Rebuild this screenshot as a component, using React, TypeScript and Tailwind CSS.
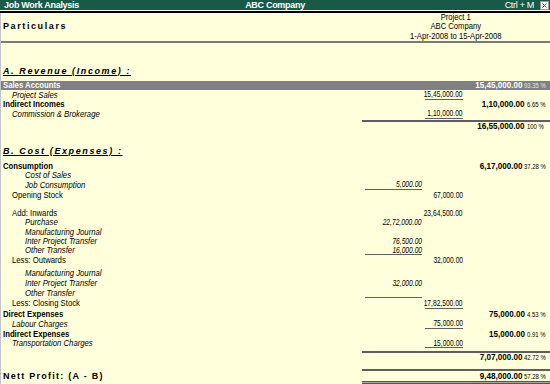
type Row = {
  kind: "spacer" | "head" | "group" | "item" | "sub" | "sub2" | "line" | "total" | "nett" | "double";
  label?: string;
  h: string;
  c1?: string;
  c1u?: boolean;
  c2?: string;
  c2u?: boolean;
  c3?: string;
  pct?: string;
  hl?: boolean;
};

const rows: Row[] = [
  { kind: "spacer", h: "h-[23px]" },
  { kind: "head", label: "A. Revenue (Income) :", h: "h-[10px]" },
  { kind: "spacer", h: "h-[5px]" },
  { kind: "group", label: "Sales Accounts", c3: "15,45,000.00", pct: "93.35 %", hl: true, h: "h-[9px]" },
  { kind: "sub", label: "Project Sales", c2: "15,45,000.00", c2u: true, h: "h-[10px]" },
  { kind: "group", label: "Indirect Incomes", c3: "1,10,000.00", pct: "6.65 %", h: "h-[9px]" },
  { kind: "sub", label: "Commission & Brokerage", c2: "1,10,000.00", c2u: true, h: "h-[10px]" },
  { kind: "spacer", h: "h-[1px]" },
  { kind: "line", h: "h-[2px]" },
  { kind: "total", c3: "16,55,000.00", pct: "100 %", h: "h-[9px]" },
  { kind: "spacer", h: "h-[15px]" },
  { kind: "head", label: "B. Cost (Expenses) :", h: "h-[10px]" },
  { kind: "spacer", h: "h-[5px]" },
  { kind: "group", label: "Consumption", c3: "6,17,000.00", pct: "37.28 %", h: "h-[10px]" },
  { kind: "sub2", label: "Cost of Sales", h: "h-[9px]" },
  { kind: "sub2", label: "Job Consumption", c1: "5,000.00", c1u: true, h: "h-[10px]" },
  { kind: "item", label: "Opening Stock", c2: "67,000.00", h: "h-[10px]" },
  { kind: "spacer", h: "h-[9px]" },
  { kind: "item", label: "Add: Inwards", c2: "23,64,500.00", h: "h-[9px]" },
  { kind: "sub2", label: "Purchase", c1: "22,72,000.00", h: "h-[9px]" },
  { kind: "sub2", label: "Manufacturing Journal", h: "h-[10px]" },
  { kind: "sub2", label: "Inter Project Transfer", c1: "76,500.00", h: "h-[9px]" },
  { kind: "sub2", label: "Other Transfer", c1: "16,000.00", c1u: true, h: "h-[9px]" },
  { kind: "item", label: "Less: Outwards", c2: "32,000.00", h: "h-[10px]" },
  { kind: "spacer", h: "h-[3px]" },
  { kind: "sub2", label: "Manufacturing Journal", h: "h-[10px]" },
  { kind: "sub2", label: "Inter Project Transfer", c1: "32,000.00", h: "h-[10px]" },
  { kind: "sub2", label: "Other Transfer", c1: "", c1u: true, h: "h-[10px]" },
  { kind: "item", label: "Less: Closing Stock", c2: "17,82,500.00", c2u: true, h: "h-[11px]" },
  { kind: "spacer", h: "h-[1px]" },
  { kind: "group", label: "Direct Expenses", c3: "75,000.00", pct: "4.53 %", h: "h-[9px]" },
  { kind: "sub", label: "Labour Charges", c2: "75,000.00", c2u: true, h: "h-[10px]" },
  { kind: "group", label: "Indirect Expenses", c3: "15,000.00", pct: "0.91 %", h: "h-[10px]" },
  { kind: "sub", label: "Transportation Charges", c2: "15,000.00", c2u: true, h: "h-[9px]" },
  { kind: "spacer", h: "h-[3px]" },
  { kind: "line", h: "h-[2px]" },
  { kind: "total", c3: "7,07,000.00", pct: "42.72 %", h: "h-[9px]" },
  { kind: "spacer", h: "h-[7px]" },
  { kind: "line", h: "h-[2px]" },
  { kind: "nett", label: "Nett Profit: (A - B)", c3: "9,48,000.00", pct: "57.28 %", h: "h-[10px]" },
  { kind: "double", h: "h-[3px]" },
];

// narrow text: the report font is a condensed sans, so squeeze Liberation Sans a bit
function Narrow({ children, className = "" }: { children: React.ReactNode; className?: string }) {
  return <span className={`inline-block origin-left scale-x-[0.86] whitespace-nowrap ${className}`}>{children}</span>;
}

function Label({ row }: { row: Row }) {
  if (row.kind === "head")
    return (
      <span className="pl-[2px] font-bold italic tracking-[1.6px] underline underline-offset-[1px] whitespace-nowrap">
        {row.label}
      </span>
    );
  if (row.kind === "nett")
    return <span className="pl-[2px] font-bold tracking-[1.25px] whitespace-nowrap">{row.label}</span>;
  if (row.kind === "group") return <Narrow className="ml-[2px] font-bold">{row.label}</Narrow>;
  if (row.kind === "item") return <Narrow className="ml-[11px]">{row.label}</Narrow>;
  if (row.kind === "sub") return <Narrow className="ml-[11px] italic">{row.label}</Narrow>;
  if (row.kind === "sub2") return <Narrow className="ml-[24px] italic">{row.label}</Narrow>;
  return null;
}

function Amount({ value, italic }: { value?: string; italic?: boolean }) {
  if (!value) return null;
  return (
    <span className={`inline-block origin-right scale-x-[0.74] whitespace-nowrap ${italic ? "italic" : ""}`}>
      {value}
    </span>
  );
}

function ReportRow({ row }: { row: Row }) {
  if (row.kind === "spacer") return <div className={row.h} />;
  if (row.kind === "line")
    return (
      <div className={`${row.h} flex`}>
        <div className="w-[361px]" />
        <div className="flex-1 bg-[#5e5e5e]" />
      </div>
    );
  if (row.kind === "double")
    return (
      <div className={`${row.h} flex`}>
        <div className="w-[361px]" />
        <div className="flex-1 border-y border-[#555] bg-[#a8a8a0]" />
      </div>
    );

  return (
    <div className={`${row.h} flex items-center leading-none ${row.hl ? "bg-[#808080] text-white" : "text-black"}`}>
      <div className="w-[364px] flex">
        <Label row={row} />
      </div>
      <div className={`w-[57px] h-full flex items-center justify-end ${row.c1u ? "border-b border-[#606060]" : ""}`}>
        <Amount value={row.c1} italic />
      </div>
      <div className="w-[3px]" />
      <div className={`w-[38px] h-full flex items-center justify-end ${row.c2u ? "border-b border-[#606060]" : ""}`}>
        <Amount value={row.c2} />
      </div>
      <div className="w-[62px] flex justify-end font-bold">
        {row.c3 && <span className="inline-block origin-right scale-x-[0.9] whitespace-nowrap">{row.c3}</span>}
      </div>
      <div className="flex-1 pl-[2px] text-[7px]">
        {row.pct && (
          <span className={`inline-block origin-left scale-x-[0.85] whitespace-nowrap ${row.hl ? "text-[#e8e8e8]" : ""}`}>
            {row.pct}
          </span>
        )}
      </div>
    </div>
  );
}

export default function App() {
  return (
    <div className="w-[550px] h-[384px] overflow-hidden bg-[#ffffdc] font-['Liberation_Sans',Arial,sans-serif] text-[9px]">
      {/* title bar */}
      <div className="h-[10px] bg-[#185a47] flex items-center text-white leading-none">
        <span className="pl-[4px] font-bold tracking-[-0.3px] w-[200px] whitespace-nowrap">Job Work Analysis</span>
        <span className="flex-1 text-center font-bold tracking-[-0.3px]">ABC Company</span>
        <div className="w-[200px] flex justify-end items-center">
          <span className="mr-[6px] tracking-[-0.3px]">Ctrl + M</span>
          <svg width="9" height="9" viewBox="0 0 9 9" className="mr-[1px]">
            <rect x="0.5" y="0.5" width="8" height="8" fill="#f4f4f4" stroke="#9a9a9a" />
            <path d="M2.5 2.5 L6.5 6.5 M6.5 2.5 L2.5 6.5" stroke="#555" strokeWidth="1" />
          </svg>
        </div>
      </div>
      <div className="h-[1px]" />
      <div className="h-[2px] bg-black" />
      <div className="border-l border-[#c4c4c4] h-[371px]">
        {/* column header */}
        <div className="h-[28px] flex">
          <div className="w-[361px] flex items-center">
            <span className="pl-[2px] font-bold tracking-[1.6px]">Particulars</span>
          </div>
          <div className="flex-1 flex flex-col items-center leading-[9.3px]">
            <span className="inline-block scale-x-[0.85]">Project 1</span>
            <span className="inline-block scale-x-[0.85]">ABC Company</span>
            <span className="inline-block scale-x-[0.85] whitespace-nowrap">1-Apr-2008 to 15-Apr-2008</span>
          </div>
        </div>
        <div className="h-[2px] bg-[#7a7a72]" />
        {rows.map((r, i) => (
          <ReportRow key={i} row={r} />
        ))}
      </div>
    </div>
  );
}
